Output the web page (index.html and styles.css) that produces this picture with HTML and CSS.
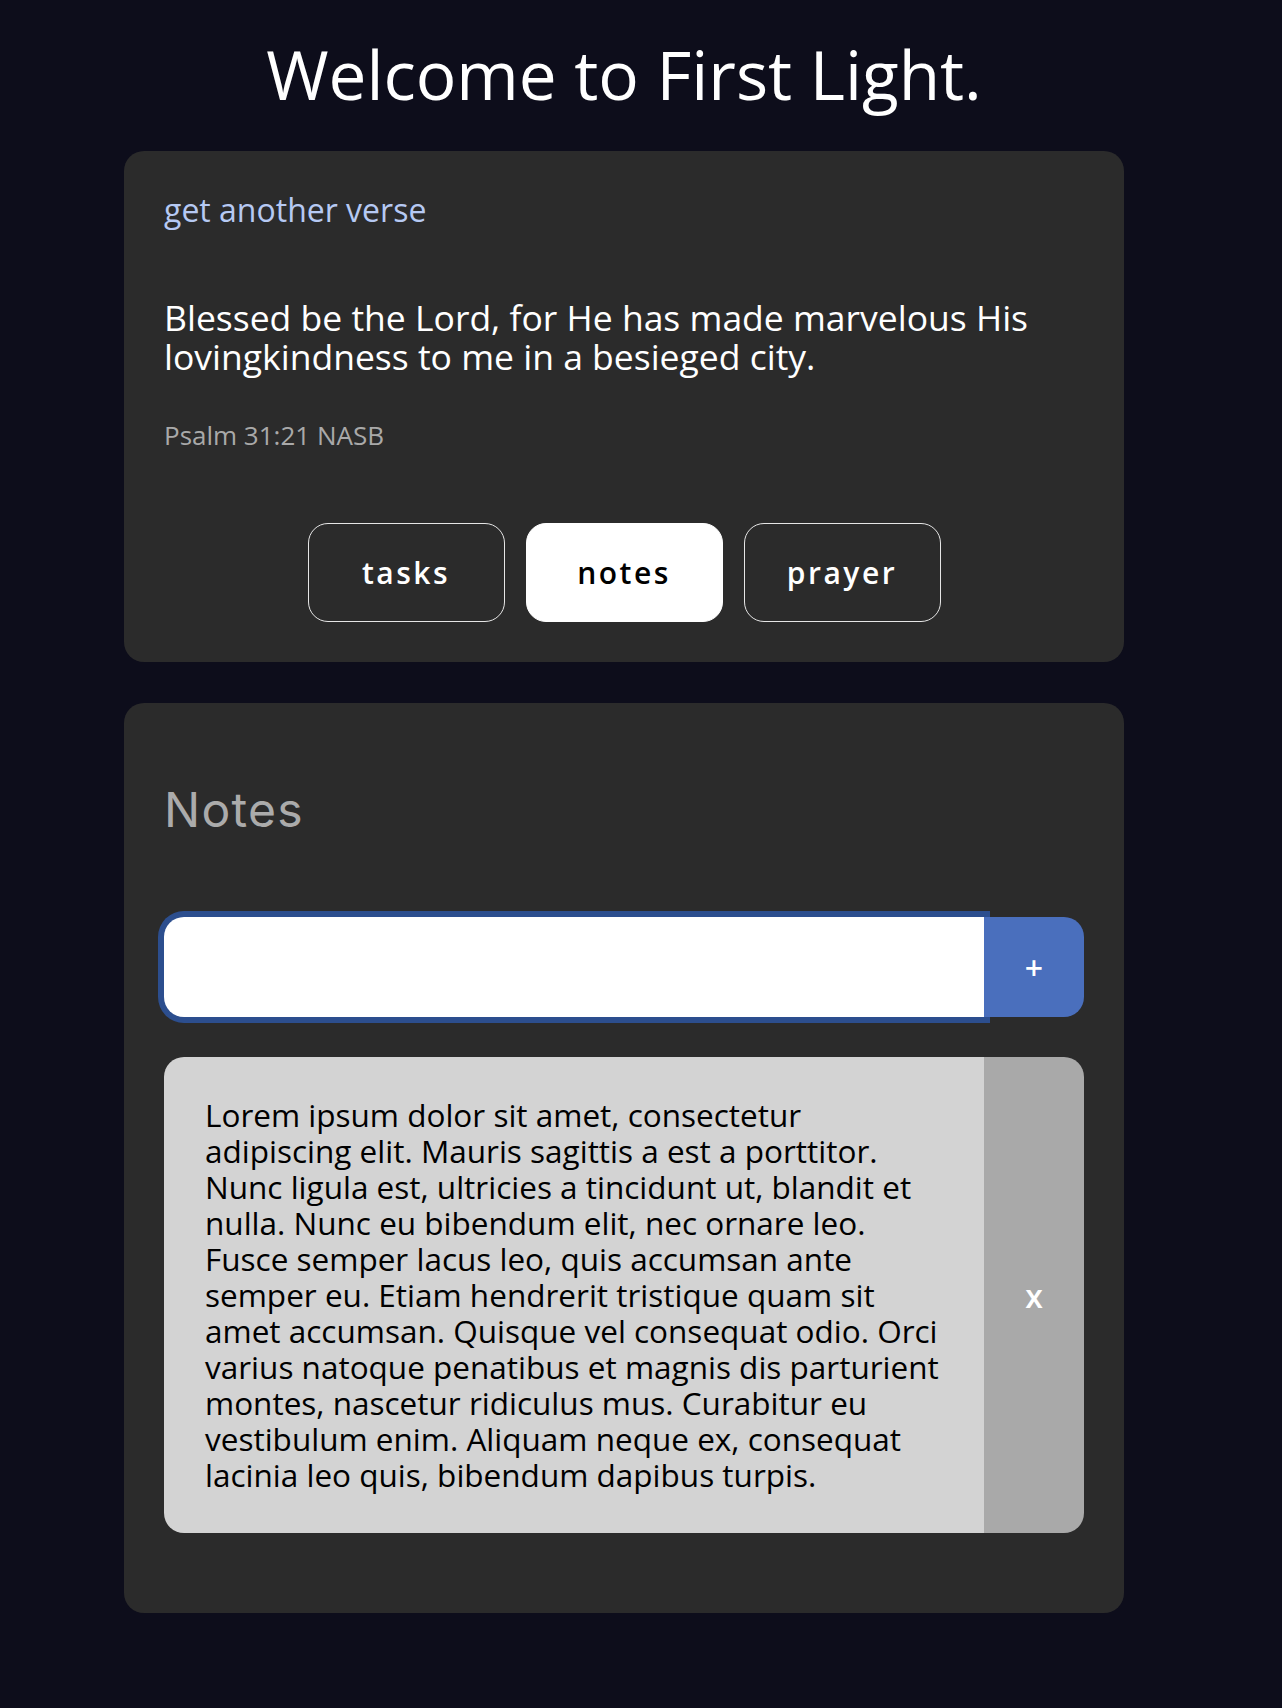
FILE: index.html
```html
<!DOCTYPE html>
<html lang="en">
<head>
<meta charset="utf-8">
<title>First Light</title>
<link rel="stylesheet" href="styles.css">
</head>
<body>
<div class="page">
  <h1 class="title">Welcome to First Light.</h1>

  <section class="card verse-card">
    <a class="another" href="#">get another verse</a>
    <p class="verse">Blessed be the Lord, for He has made marvelous His lovingkindness to me in a besieged city.</p>
    <p class="ref">Psalm 31:21 NASB</p>
    <div class="tabs">
      <button class="tab">tasks</button>
      <button class="tab active">notes</button>
      <button class="tab">prayer</button>
    </div>
  </section>

  <section class="card notes-card">
    <h2 class="notes-title">Notes</h2>
    <div class="add-row">
      <input class="note-input" type="text" autofocus>
      <button class="add-btn">+</button>
    </div>
    <div class="note">
      <p class="note-text">Lorem ipsum dolor sit amet, consectetur adipiscing elit. Mauris sagittis a est a porttitor. Nunc ligula est, ultricies a tincidunt ut, blandit et nulla. Nunc eu bibendum elit, nec ornare leo. Fusce semper lacus leo, quis accumsan ante semper eu. Etiam hendrerit tristique quam sit amet accumsan. Quisque vel consequat odio. Orci varius natoque penatibus et magnis dis parturient montes, nascetur ridiculus mus. Curabitur eu vestibulum enim. Aliquam neque ex, consequat lacinia leo quis, bibendum dapibus turpis.</p>
      <button class="del-btn">x</button>
    </div>
  </section>
</div>
</body>
</html>
```

FILE: styles.css
```css
html, body {
  margin: 0;
  padding: 0;
  background: #0d0d1b;
}

body {
  font-family: "Open Sans", "Liberation Sans", sans-serif;
  color: #fff;
}

.page {
  width: 1248px;
  display: flex;
  flex-direction: column;
  align-items: center;
  gap: 41px;
  padding-bottom: 95px;
}

.title {
  margin: 36px 0 -2px;
  font-size: 67.5px;
  line-height: 76px;
  font-weight: 400;
  text-align: center;
  color: #fff;
}

.card {
  width: 1000px;
  box-sizing: border-box;
  background: #2b2b2b;
  border-radius: 20px;
  padding: 40px;
}

.verse-card {
  display: flex;
  flex-direction: column;
  align-items: flex-start;
}

.another {
  font-size: 32px;
  line-height: 38px;
  color: #b6c9f3;
  text-decoration: none;
}

.verse {
  margin: 69px 0 0;
  font-size: 35.5px;
  line-height: 39px;
  color: #fff;
}

.ref {
  margin: 44px 0 0;
  font-size: 26px;
  line-height: 30px;
  color: #a9a9a9;
}

.tabs {
  align-self: stretch;
  display: flex;
  justify-content: center;
  gap: 21px;
  margin-top: 73px;
}

.tab {
  width: 197px;
  height: 99px;
  box-sizing: border-box;
  border: 1.5px solid #e6e6e6;
  border-radius: 20px;
  background: transparent;
  color: #fff;
  font-family: "Open Sans", "Liberation Sans", sans-serif;
  font-size: 30px;
  font-weight: 600;
  letter-spacing: 2.5px;
  padding: 0;
}

.tab.active {
  background: #fff;
  border-color: #fff;
  color: #000;
}

.notes-card {
  padding-bottom: 80px;
}

.notes-title {
  margin: 39px 0 79px;
  font-family: "Inter", "Liberation Sans", sans-serif;
  font-size: 48px;
  line-height: 56px;
  font-weight: 400;
  letter-spacing: 1.3px;
  color: #ababab;
}

.add-row {
  display: flex;
  height: 100px;
}

.note-input {
  flex: 1;
  min-width: 0;
  height: 100px;
  box-sizing: border-box;
  border: none;
  outline: none;
  border-radius: 20px 0 0 20px;
  box-shadow: 0 0 0 6px #2c4e8e;
  background: #fff;
  padding: 0 20px;
  font-family: "Open Sans", "Liberation Sans", sans-serif;
  font-size: 30px;
  color: #000;
  caret-color: #000;
}

.add-btn {
  width: 100px;
  height: 100px;
  border: none;
  border-radius: 0 20px 20px 0;
  background: #4a6fbd;
  color: #fff;
  font-family: "Open Sans", "Liberation Sans", sans-serif;
  font-size: 32px;
  font-weight: 600;
  padding: 0;
}

.note {
  display: flex;
  margin-top: 40px;
  border-radius: 20px;
  overflow: hidden;
}

.note-text {
  flex: 1;
  margin: 0;
  padding: 40px 40px 40px 41px;
  background: #d3d3d3;
  color: #000;
  font-size: 31.5px;
  line-height: 36px;
}

.del-btn {
  width: 100px;
  flex: none;
  border: none;
  background: #a9a9a9;
  color: #fff;
  font-family: "Open Sans", "Liberation Sans", sans-serif;
  font-size: 32px;
  font-weight: 600;
  padding: 0;
}
```
